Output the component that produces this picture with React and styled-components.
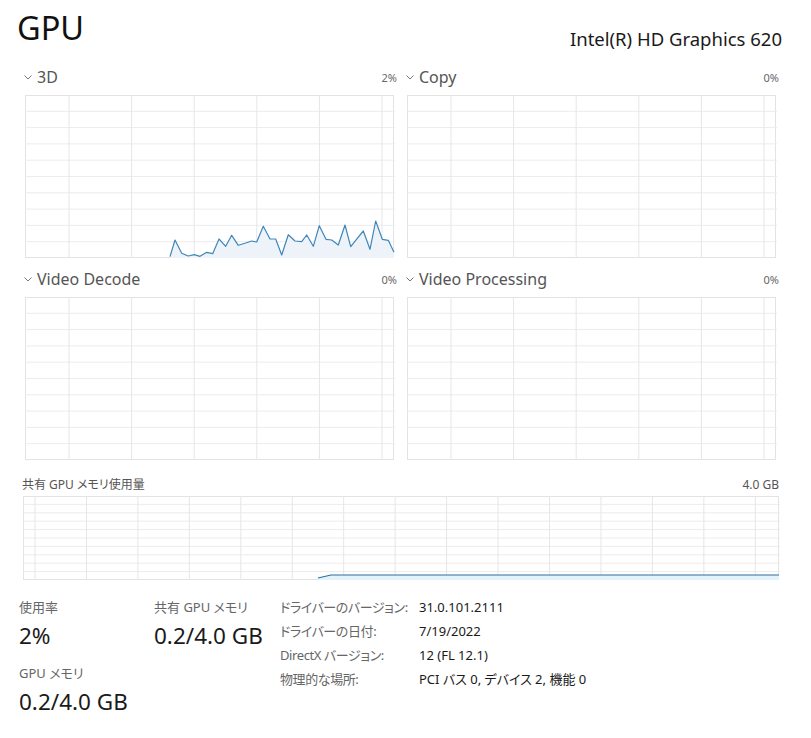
import styled, { createGlobalStyle } from "styled-components";

const GlobalStyle = createGlobalStyle`
  html, body {
    margin: 0;
    padding: 0;
    background: #ffffff;
  }
  body {
    font-family: "Noto Sans", "Noto Sans CJK JP", sans-serif;
    font-feature-settings: "palt";
    color: #1a1a1a;
  }
`;

const Page = styled.div`
  width: 811px;
  height: 738px;
  box-sizing: border-box;
  padding: 0 29px 0 18px;
  overflow: hidden;
`;

const Header = styled.div`
  display: flex;
  justify-content: space-between;
  align-items: flex-end;
  height: 56px;
`;

const Title = styled.h1`
  margin: 0 0 0 -1px;
  font-size: 32.5px;
  font-weight: 400;
  line-height: 56px;
  color: #111;
`;

const Adapter = styled.div`
  font-size: 18.5px;
  line-height: 24px;
  margin-bottom: 5px;
  color: #1a1a1a;
`;

const Graphs = styled.div`
  display: grid;
  grid-template-columns: 375px 375px;
  column-gap: 7px;
  row-gap: 12px;
  margin: 12px 3px 0 4px;
`;

const Panel = styled.div`
  display: flex;
  flex-direction: column;
`;

const PanelHead = styled.div`
  display: flex;
  align-items: center;
  justify-content: space-between;
  height: 18px;
  padding-left: 2px;
`;

const PanelName = styled.div`
  display: flex;
  align-items: center;
  gap: 5px;
  font-size: 16px;
  color: #555;
`;

const Percent = styled.span`
  font-size: 11px;
  color: #666;
`;

const ChartBox = styled.div`
  margin: ${(p) => p.$margin || "9px 3px 0 3px"};
  height: ${(p) => p.$height}px;
  border: 1px solid #e3e3e3;
  box-sizing: border-box;
  position: relative;
`;

const MemorySection = styled.div`
  margin: 16px 3px 0 4px;
`;

const MemoryHead = styled.div`
  display: flex;
  justify-content: space-between;
  align-items: center;
  height: 16px;
  font-size: 12px;
  color: #555;
`;

const Stats = styled.div`
  display: flex;
  align-items: flex-start;
  margin-top: 17px;
  margin-left: 1px;
`;

const StatColumn = styled.div`
  display: flex;
  flex-direction: column;
  width: ${(p) => p.$width}px;
`;

const StatLabel = styled.div`
  font-size: 13px;
  line-height: 20px;
  color: #666;
`;

const StatValue = styled.div`
  font-size: 22.5px;
  line-height: 30px;
  color: #1a1a1a;
  margin: 4px 0 12px;
`;

const InfoTable = styled.div`
  display: grid;
  grid-template-columns: 139px auto;
  align-content: start;
  row-gap: 4px;
  font-size: 13px;
  line-height: 20px;
  white-space: nowrap;
`;

const InfoKey = styled.div`
  color: #666;
  letter-spacing: -0.4px;
`;

const InfoVal = styled.div`
  color: #1a1a1a;
`;

const Chevron = () => (
  <svg width="8" height="5" viewBox="0 0 8 5">
    <path d="M0.5 0.5 L4 4 L7.5 0.5" fill="none" stroke="#777" strokeWidth="1" />
  </svg>
);

const d3 = [
  [170, 256.7], [175, 240], [181.7, 253.3], [188.3, 256], [194.3, 254.7],
  [200, 256.3], [206.7, 252.3], [212.7, 253.7], [219, 239], [225.7, 246.3],
  [231.7, 235.3], [238.3, 245.3], [245, 243.3], [251.7, 241], [256.7, 242],
  [263.3, 226.3], [270, 239], [275.7, 239], [281.7, 255], [288.3, 234.7],
  [295, 241], [301.7, 241.7], [306.7, 235], [313.3, 246.3], [319.3, 225.7],
  [326, 239.3], [331.7, 240], [338.3, 245], [345, 225], [350.7, 246.7],
  [357.3, 238.3], [363.3, 231], [370, 249.3], [375.7, 221], [382.3, 239.3],
  [388.3, 240.3], [394, 252.3],
].map(([x, y]) => [x - 25, y - 95]);

const GridChart = ({ width, height, rows, colStart, colStep, points, stroke, fill }) => {
  const cols = [];
  for (let x = colStart; x < width; x += colStep) cols.push(x);
  const hs = [];
  for (let i = 1; i < rows; i++) hs.push((height / rows) * i);
  const line = points ? points.map((p) => p.join(",")).join(" ") : null;
  const area = points
    ? `${points[0][0]},${height} ${line} ${points[points.length - 1][0]},${height}`
    : null;
  return (
    <svg width={width} height={height} viewBox={`0 0 ${width} ${height}`} style={{ display: "block", position: "absolute", left: -1, top: -1 }}>
      {hs.map((y) => (
        <line key={"h" + y} x1="0" x2={width} y1={y} y2={y} stroke="#ececec" strokeWidth="1" />
      ))}
      {cols.map((x) => (
        <line key={"v" + x} x1={x} x2={x} y1="0" y2={height} stroke="#e6e6e6" strokeWidth="1" />
      ))}
      {points && <polygon points={area} fill={fill} />}
      {points && <polyline points={line} fill="none" stroke={stroke} strokeWidth="1.2" strokeLinejoin="round" />}
    </svg>
  );
};

const engines = [
  { name: "3D", pct: "2%", data: d3 },
  { name: "Copy", pct: "0%" },
  { name: "Video Decode", pct: "0%" },
  { name: "Video Processing", pct: "0%" },
];

const memPoints = [
  [295, 82],
  [308, 79],
  [756, 79],
];

const info = [
  ["ドライバーのバージョン:", "31.0.101.2111"],
  ["ドライバーの日付:", "7/19/2022"],
  ["DirectX バージョン:", "12 (FL 12.1)"],
  ["物理的な場所:", "PCI バス 0, デバイス 2, 機能 0"],
];

export default function App() {
  return (
    <Page>
      <GlobalStyle />
      <Header>
        <Title>GPU</Title>
        <Adapter>Intel(R) HD Graphics 620</Adapter>
      </Header>

      <Graphs>
        {engines.map((e) => (
          <Panel key={e.name}>
            <PanelHead>
              <PanelName>
                <Chevron />
                {e.name}
              </PanelName>
              <Percent>{e.pct}</Percent>
            </PanelHead>
            <ChartBox $height={163}>
              <GridChart
                width={370}
                height={163}
                rows={10}
                colStart={44}
                colStep={62.6}
                points={e.data}
                stroke="#3f87b8"
                fill="#edf3f9"
              />
            </ChartBox>
          </Panel>
        ))}
      </Graphs>

      <MemorySection>
        <MemoryHead>
          <span>共有 GPU メモリ使用量</span>
          <span>4.0 GB</span>
        </MemoryHead>
        <ChartBox $height={84} $margin="4px 0 0 1px">
          <GridChart
            width={757}
            height={84}
            rows={10}
            colStart={12}
            colStep={51.45}
            points={memPoints}
            stroke="#2f6f99"
            fill="#e3f3fb"
          />
        </ChartBox>
      </MemorySection>

      <Stats>
        <StatColumn $width={135}>
          <StatLabel>使用率</StatLabel>
          <StatValue>2%</StatValue>
          <StatLabel>GPU メモリ</StatLabel>
          <StatValue>0.2/4.0 GB</StatValue>
        </StatColumn>
        <StatColumn $width={126}>
          <StatLabel>共有 GPU メモリ</StatLabel>
          <StatValue>0.2/4.0 GB</StatValue>
        </StatColumn>
        <InfoTable>
          {info.map(([k, v]) => [
            <InfoKey key={k}>{k}</InfoKey>,
            <InfoVal key={v}>{v}</InfoVal>,
          ])}
        </InfoTable>
      </Stats>
    </Page>
  );
}
